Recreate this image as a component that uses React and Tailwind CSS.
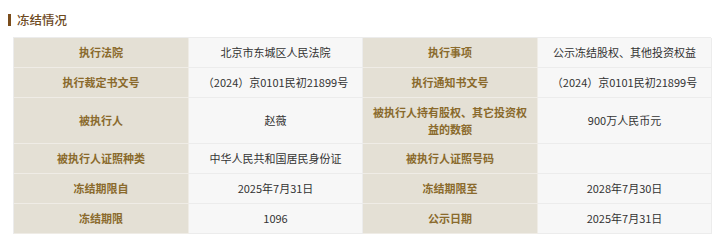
import React from "react";

const rows = [
  [["执行法院", "北京市东城区人民法院"], ["执行事项", "公示冻结股权、其他投资权益"]],
  [["执行裁定书文号", "（2024）京0101民初21899号"], ["执行通知书文号", "（2024）京0101民初21899号"]],
  [["被执行人", "赵薇"], ["被执行人持有股权、其它投资权益的数额", "900万人民币元"]],
  [["被执行人证照种类", "中华人民共和国居民身份证"], ["被执行人证照号码", ""]],
  [["冻结期限自", "2025年7月31日"], ["冻结期限至", "2028年7月30日"]],
  [["冻结期限", "1096"], ["公示日期", "2025年7月31日"]],
];

export default function App() {
  return (
    <div
      className="w-[720px] h-[242px] bg-white pt-[11px]"
      style={{ fontFamily: '"Noto Sans CJK SC", "Noto Sans", sans-serif' }}
    >
      <div className="flex items-center h-[17px] pl-[8px]">
        <div className="w-[3px] h-[12px] bg-[#7a4d1c]" />
        <div className="ml-[6px] text-[12.5px] leading-[17px] font-medium text-[#6e4a1f]">冻结情况</div>
      </div>
      <div className="ml-[13px] mt-[9px] w-[698px] grid grid-cols-[175px_174px_175px_174px] border-t border-l border-[#ececec]">
        {rows.map((row, i) =>
          row.flatMap(([label, value], j) => [
            <div
              key={`l${i}${j}`}
              className={`${i === 2 ? "h-[46px]" : "h-[30px]"} bg-[#e4e0d5] border-r border-b border-[#efece6] flex items-center justify-center text-center px-[8px] text-[11px] leading-[17px] font-bold text-[#8a6a2c]`}
            >
              {label}
            </div>,
            <div
              key={`v${i}${j}`}
              className={`${i === 2 ? "h-[46px]" : "h-[30px]"} bg-[#f7f7f7] border-r border-b border-[#ececec] flex items-center justify-center text-center px-[8px] text-[11px] leading-[17px] text-[#333333]`}
            >
              {value}
            </div>,
          ])
        )}
      </div>
    </div>
  );
}
